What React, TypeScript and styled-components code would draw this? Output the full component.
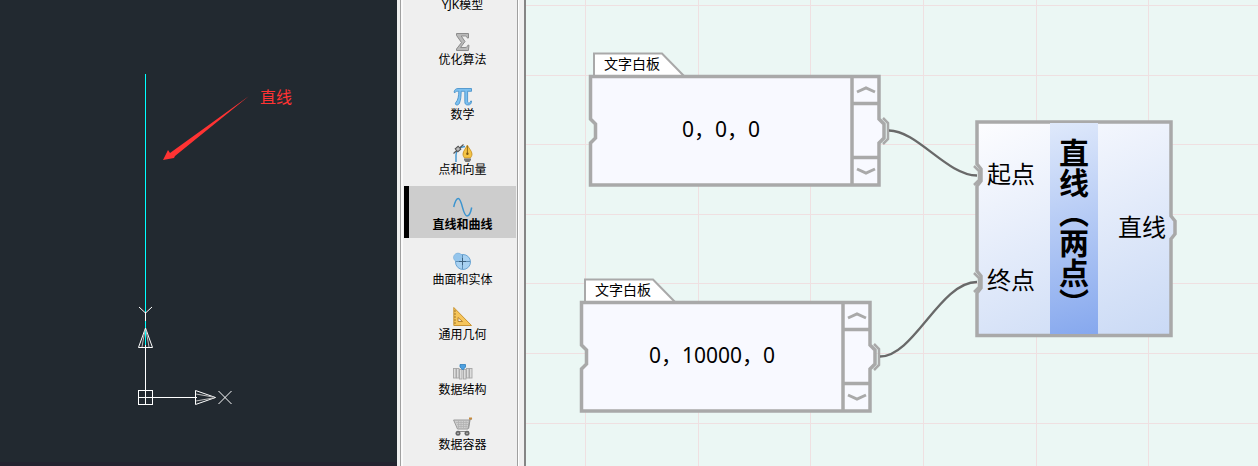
import React from 'react';
import styled, { createGlobalStyle } from 'styled-components';

const FRAME = '#a9a9a9';

const GlobalStyle = createGlobalStyle`
  * { box-sizing: border-box; }
  body {
    margin: 0;
    font-family: 'Noto Sans', 'Noto Sans CJK SC', sans-serif;
    color: #000;
  }
  button {
    font: inherit;
    color: inherit;
    border: 0;
    padding: 0;
    background: none;
    cursor: pointer;
  }
  svg { display: block; }
`;

const Workspace = styled.div`
  display: grid;
  grid-template-columns: 397px 129px minmax(0, 1fr);
  height: 100vh;
  overflow: hidden;
`;

/* ---------- CAD viewport ---------- */

const Viewport = styled.section`
  position: relative;
  background: #222930;
  border-bottom: 4px solid #23232f;
  overflow: hidden;
`;

const Annotation = styled.span`
  position: absolute;
  left: 260px;
  top: 85px;
  font-family: 'Noto Sans CJK SC', sans-serif;
  font-size: 16px;
  line-height: 22px;
  color: #f33;
`;

const CadDrawing = () => (
  <svg width="397" height="466" fill="none" aria-hidden="true">
    <g shapeRendering="crispEdges">
      <path d="M145.5 310V397M145 397.5H197" stroke="#fff" />
      <path d="M145.5 74V312M145.5 321V345" stroke="#0ff" />
      <path d="M138.500 390.500H152.500V404.500H138.500Z M138 397.500H153 M145.500 390V405" stroke="#fff" />
    </g>
    <path d="M139 307L145.500 313L152 307M145.500 313V321" stroke="#fff" />
    <path d="M145.500 328L138.500 347.500H152.500Z" stroke="#fff" />
    <path d="M145 330L142 347M146 330L149 347" stroke="#bbb" />
    <path d="M215.500 397.500L195.500 390.500V404.500Z" stroke="#fff" />
    <path d="M213 397L196 394M213 398L196 401" stroke="#bbb" />
    <path d="M218.500 391L231.500 404M231.500 391L218.500 404" stroke="#fff" />
    <path d="M249 96L175 156L174 158L163 160L168 150L170 153Z" fill="#f33" />
  </svg>
);

/* ---------- Category sidebar ---------- */

const Sidebar = styled.nav`
  background: #f0f0f0;
  padding: 0 6px 0 3px;
  border-right: 2px solid #858585;
  overflow: hidden;
`;

const CategoryList = styled.div`
  display: flex;
  flex-direction: column;
  gap: 3px;
  min-height: calc(100% + 34px);
  padding: 0 1px;
  border-left: 1px solid #a0a0a0;
  border-right: 1px solid #a0a0a0;
  box-shadow: inset 2px 0 #fafafa, 1px 0 #fff;
  background: #efefef;
  margin-top: -34px;
`;

const Category = styled.button<{ $active?: boolean }>`
  flex: none;
  display: flex;
  flex-direction: column;
  align-items: center;
  height: 52px;
  margin-left: 2px;
  padding-top: 11px;
  border-left: 5px solid ${(p) => (p.$active ? '#000' : 'transparent')};
  background: ${(p) => (p.$active ? '#cdcdcd' : 'transparent')};
  font-size: 12px;
  line-height: 16px;
  font-weight: ${(p) => (p.$active ? 700 : 400)};
  white-space: nowrap;
`;

const Icon = ({ children }: { children?: React.ReactNode }) => (
  <svg width="20" height="20" viewBox="0 0 20 20" fill="none" aria-hidden="true">
    {children}
  </svg>
);

const SigmaIcon = () => (
  <Icon>
    <path
      d="M3.500 1.500H15.500V6H14.300C14 4.500 13.300 4 11.500 4H8.200L12 9.500L7.500 15.500H12C14 15.500 14.500 14.600 14.900 13.200H16L15.400 18.500H3.500V17L8.500 10.600L3.500 3.400Z"
      fill="#b9b9b9"
      stroke="#8c8c8c"
    />
  </Icon>
);

const PiIcon = () => (
  <Icon>
    <path
      d="M1 5.200C1.500 2.800 2.800 1.500 5 1.500H18.500V4.300H14.600V14C14.600 15.500 15 16 16 16C17 16 17.400 15.300 17.600 14H18.600C18.500 16.800 17.200 18 15 18C12.500 18 11.800 16.800 11.800 14.500V4.300H8.200C8.100 9 7.800 13 6.500 16C5.800 17.700 4.800 18.100 3.700 18C2.200 17.800 2 16.300 3 15.200C5 13.200 5.700 9 5.800 4.300H4.500C3 4.300 2.400 4.700 1.900 5.800Z"
      fill="#7cc0f0"
      stroke="#3f8cc6"
      strokeWidth=".8"
    />
  </Icon>
);

const PenIcon = () => (
  <Icon>
    <path d="M3 20V13C3 8 6 5 12 4.500" stroke="#3d94d0" strokeWidth="1.400" />
    <path d="M.5 11.500L10.500 2.500" stroke="#555" strokeWidth="1.200" />
    <rect x="3" y="5" width="4" height="4" transform="rotate(-42 5 7)" fill="#bbb" stroke="#555" />
    <path d="M14.300 3C13.600 5.500 10 9 10 12C10 14 11 15 11.500 16H17.300C18 15 19 14 19 12C19 9 15.200 5.500 14.300 3Z" fill="#f5c445" stroke="#c18a1c" strokeWidth=".8" />
    <path d="M14.400 4V11" stroke="#7a5510" strokeWidth=".8" />
    <circle cx="14.400" cy="11.800" r="1.200" fill="#7a5510" />
    <path d="M11 16.500H18V18L16.500 20H12.500L11 18Z" fill="#777" />
  </Icon>
);

const SineIcon = () => (
  <Icon>
    <path
      d="M.7 10C2 4.500 3 1.500 5.300 1.500C9 1.500 9.800 19 14 19C16.500 19 17.800 15 18.700 10.500"
      stroke="#3c94cf"
      strokeWidth="1.500"
    />
  </Icon>
);

const SurfaceIcon = () => (
  <Icon>
    <circle cx="5" cy="5.500" r="4.300" fill="#94c5ec" stroke="#6ba5d4" strokeWidth=".8" />
    <circle cx="10" cy="10" r="7.500" fill="#a9d2f2" stroke="#6ba5d4" />
    <circle cx="5" cy="5.500" r="3.900" fill="#94c5ec" />
    <path d="M9.500 3V17M3 9.500H17" stroke="#5f8fb6" />
    <path d="M9.500 6V13M6 9.500H13" stroke="#3d617f" />
  </Icon>
);

const SetSquareIcon = () => (
  <Icon>
    <path d="M.8 .5L18.500 18.500H.8Z" fill="#f6c55b" stroke="#c99433" />
    <path d="M5 10.500L9.500 14.500H5Z" fill="#efefef" stroke="#b7832b" />
    <path d="M1 4H3M1 7H3M1 10H3M1 13H3M1 16H3" stroke="#8d641e" strokeWidth=".8" />
  </Icon>
);

const StructureIcon = () => (
  <Icon>
    {[0, 3, 6, 10, 13, 16].map((x) => (
      <rect key={x} x={x + 0.5} y={x === 6 || x === 10 ? 7.5 : 6.5} width="2.500" height="9.500" fill="#ddd" stroke="#a6a6a6" strokeWidth=".9" />
    ))}
    <path d="M7 2.500H12.500V5L9.800 8L7 5Z" fill="#4ea0e0" stroke="#2f7dbb" strokeWidth=".8" />
  </Icon>
);

const CartIcon = () => (
  <Icon>
    <path d="M16 14.500H4.500M15.500 11.500L17 2.500L19 1.500" stroke="#8b8b8b" strokeWidth="1.200" />
    <path d="M.6 3H16.500L15 12H4.500Z" fill="#cfcfcf" stroke="#9a9a9a" />
    <path d="M3 5.500H15M4 7.500H15M4.500 9.500H14.500M5.500 4V11M8 4V11M10.500 4V11M13 4V11" stroke="#b2b2b2" strokeWidth=".8" />
    <path d="M16 1.500H19" stroke="#c78a3c" strokeWidth="2" />
    <circle cx="5" cy="16.200" r="2.500" fill="#666" />
    <circle cx="14" cy="16.200" r="2.500" fill="#666" />
    <circle cx="5" cy="16.200" r=".8" fill="#ccc" />
    <circle cx="14" cy="16.200" r=".8" fill="#ccc" />
  </Icon>
);

const categories = [
  { label: 'YJK模型', icon: Icon },
  { label: '优化算法', icon: SigmaIcon },
  { label: '数学', icon: PiIcon },
  { label: '点和向量', icon: PenIcon },
  { label: '直线和曲线', icon: SineIcon, active: true },
  { label: '曲面和实体', icon: SurfaceIcon },
  { label: '通用几何', icon: SetSquareIcon },
  { label: '数据结构', icon: StructureIcon },
  { label: '数据容器', icon: CartIcon },
];

/* ---------- Node canvas ---------- */

const Canvas = styled.main`
  position: relative;
  background: #ebf7f4;
  overflow: hidden;
`;

const Backdrop = styled.svg`
  position: absolute;
  inset: 0;
  width: 100%;
  height: 100%;
  pointer-events: none;
`;

const gridColumns = [59, 172, 284, 397, 510, 622];
const gridRows = [5, 75, 144, 214, 283, 353, 423];

const NodeShape = styled.svg`
  position: absolute;
  left: 0;
  top: 0;
  overflow: visible;
  pointer-events: none;
`;

const NodeBox = styled.article<{ $x: number; $y: number }>`
  position: absolute;
  left: ${(p) => p.$x}px;
  top: ${(p) => p.$y}px;
`;

const Board = styled(NodeBox)`
  width: 292px;
`;

const BoardTab = styled.h2`
  position: relative;
  margin: 0;
  padding-left: 15px;
  height: 23px;
  font-size: 14px;
  font-weight: 400;
  line-height: 23px;
`;

const BoardBody = styled.div`
  position: relative;
  display: grid;
  grid-template-columns: 1fr 28px;
  height: 112px;
`;

const BoardText = styled.p`
  margin: 0;
  padding-bottom: 4px;
  align-self: center;
  text-align: center;
  font-size: 21px;
  line-height: 30px;
`;

const Scroller = styled.div`
  display: flex;
  flex-direction: column;
  justify-content: space-between;
  padding: 2px 3px 3px 0;
`;

const ScrollButton = styled.button`
  display: grid;
  place-items: center;
  height: 26px;
`;

const Chevron = ({ down }: { down?: boolean }) => (
  <svg width="20" height="8" fill="none" stroke={FRAME} strokeWidth="3" aria-hidden="true">
    <path d={down ? 'M1 2L10 6L19 2' : 'M1 6L10 2L19 6'} />
  </svg>
);

const TextBoard = ({ x, y, text }: { x: number; y: number; text: string }) => (
  <Board $x={x} $y={y}>
    <NodeShape width="300" height="136" fill="none" stroke={FRAME}>
      <path d="M5 24V1.500H73L95 24" fill="#fff" strokeWidth="2" />
      <g transform="translate(0 23)" strokeWidth="3.500">
        <path
          d="M1.500 1.500H290V44L295 49V63L290 68V110H1.500V68L6.500 63V49L1.500 44Z"
          fill="#f8f9ff"
        />
        <path d="M263 2V110M263 28.500H290M263 82.500H290" />
        <path d="M294 43L299 48V64L294 69" strokeWidth="2.500" />
      </g>
    </NodeShape>
    <BoardTab>文字白板</BoardTab>
    <BoardBody>
      <BoardText>{text}</BoardText>
      <Scroller>
        <ScrollButton aria-label="Scroll up"><Chevron /></ScrollButton>
        <ScrollButton aria-label="Scroll down"><Chevron down /></ScrollButton>
      </Scroller>
    </BoardBody>
  </Board>
);

const LineNode = styled(NodeBox)`
  width: 198px;
  height: 217px;
  display: grid;
  grid-template-columns: 72px 48px 1fr;
  padding: 3px;
`;

const Ports = styled.div<{ $output?: boolean }>`
  position: relative;
  display: flex;
  flex-direction: column;
  justify-content: center;
  gap: 70px;
  padding: 0 ${(p) => (p.$output ? 4 : 0)}px 4px ${(p) => (p.$output ? 0 : 9)}px;
  text-align: ${(p) => (p.$output ? 'right' : 'left')};
  font-size: 24px;
  line-height: 36px;
`;

const NodeTitle = styled.h2`
  position: relative;
  display: flex;
  align-items: center;
  justify-content: center;
  margin: 0;
  padding-bottom: 2px;
  background: linear-gradient(165deg, #dfe9fb, #86a8ee);
  font-size: 30px;
  line-height: 48px;
  font-weight: 700;
  font-family: 'Noto Sans CJK SC', sans-serif;
  writing-mode: vertical-rl;
`;

export default function App() {
  return (
    <>
      <GlobalStyle />
      <Workspace>
        <Viewport>
          <CadDrawing />
          <Annotation>直线</Annotation>
        </Viewport>

        <Sidebar>
          <CategoryList>
            {categories.map(({ label, icon: Glyph, active }) => (
              <Category key={label} $active={active}>
                <Glyph />
                {label}
              </Category>
            ))}
          </CategoryList>
        </Sidebar>

        <Canvas>
          <Backdrop fill="none" aria-hidden="true">
            <g stroke="#efe0e1" shapeRendering="crispEdges">
              {gridColumns.map((x) => (
                <line key={x} x1={x + 0.5} x2={x + 0.5} y1="0" y2="100%" />
              ))}
              {gridRows.map((y) => (
                <line key={y} x1="0" x2="100%" y1={y + 0.5} y2={y + 0.5} />
              ))}
            </g>
          </Backdrop>

          <TextBoard x={63} y={52} text="0，0，0" />
          <TextBoard x={54} y={278} text="0，10000，0" />

          <LineNode $x={449} $y={120}>
            <NodeShape width="202" height="217" fill="none" stroke={FRAME} strokeWidth="3.500">
              <defs>
                <linearGradient id="nodeBody" x1="0" y1="0" x2="0.500" y2="1.200">
                  <stop offset="0" stopColor="#fdfdff" />
                  <stop offset="1" stopColor="#c9d9f5" />
                </linearGradient>
              </defs>
              <path
                d="M2 2H196V96L200 101V114L196 119V215.500H2V173L6 168V156L2 151V66L6 61V49L2 44Z"
                fill="url(#nodeBody)"
              />
            </NodeShape>
            <Ports>
              <span>起点</span>
              <span>终点</span>
            </Ports>
            <NodeTitle>直线（两点）</NodeTitle>
            <Ports $output>
              <span>直线</span>
            </Ports>
          </LineNode>

          <Backdrop fill="none" aria-hidden="true">
            <path d="M448 166L453 171V180L448 185M448 273L453 278V287L448 292" stroke={FRAME} strokeWidth="2.500" />
            <path d="M363 130.500C391 130.500 421 175.500 451 175.500" stroke="#696969" strokeWidth="2.300" />
            <path d="M354 356.500C388 356.500 414 282 451 282" stroke="#696969" strokeWidth="2.300" />
          </Backdrop>
        </Canvas>
      </Workspace>
    </>
  );
}
